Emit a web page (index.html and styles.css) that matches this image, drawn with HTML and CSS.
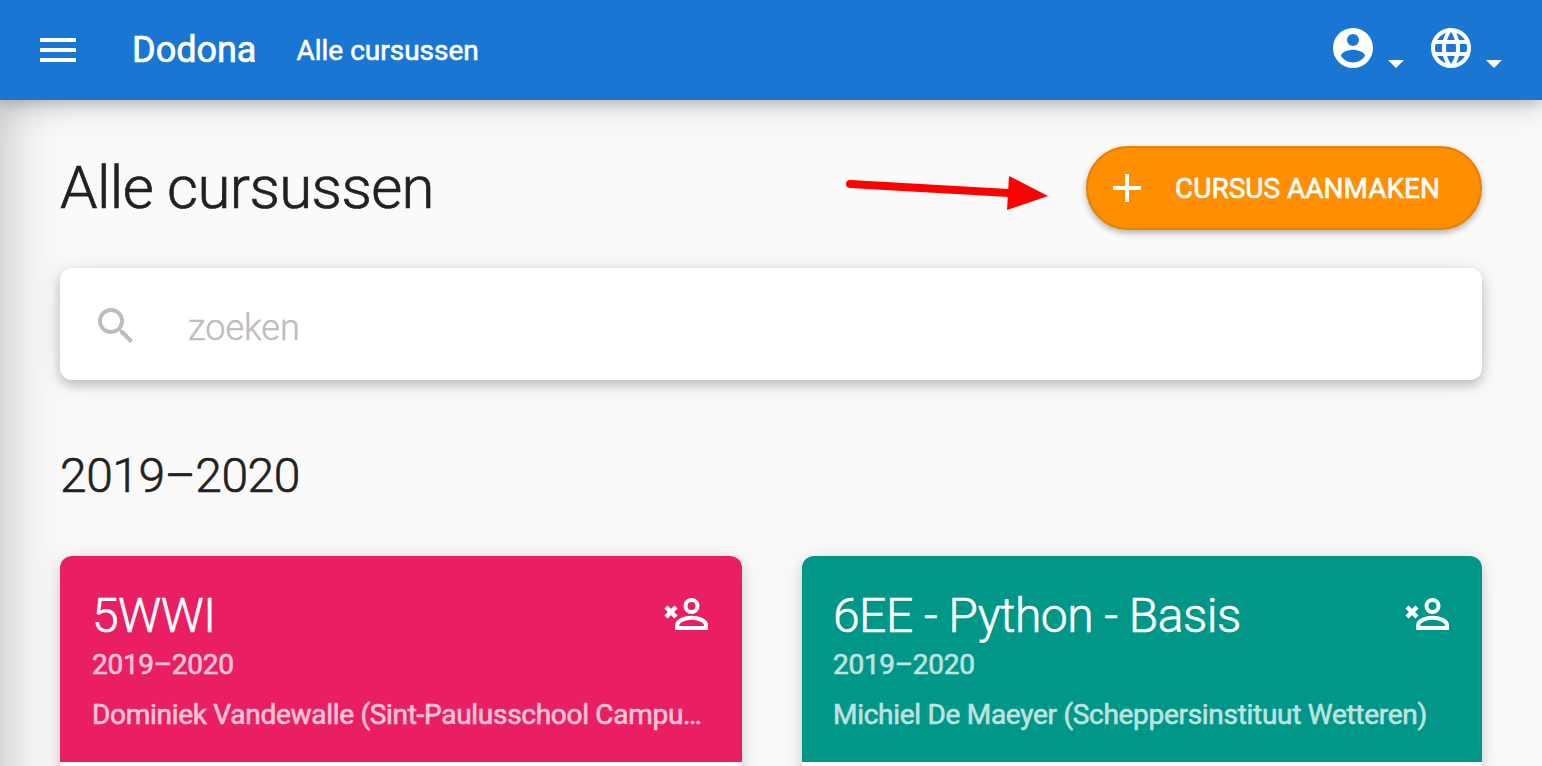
FILE: index.html
```html
<!DOCTYPE html>
<html lang="nl">
<head>
<meta charset="utf-8">
<title>Alle cursussen - Dodona</title>
<link rel="stylesheet" href="styles.css">
</head>
<body>
<header class="navbar">
  <svg class="menu" viewBox="0 0 36 24"><path d="M0 0h36v4H0zM0 10h36v4H0zM0 20h36v4H0z"/></svg>
  <span class="brand">Dodona</span>
  <span class="crumb">Alle cursussen</span>
  <div class="nav-actions">
    <div class="dropdown">
      <svg class="nav-icon" viewBox="0 0 24 24"><path d="M12 19.2c-2.500 0-4.710-1.280-6-3.200.030-2 4-3.100 6-3.100s5.970 1.100 6 3.100a7.230 7.230 0 0 1-6 3.200M12 5a3 3 0 0 1 3 3 3 3 0 0 1-3 3 3 3 0 0 1-3-3 3 3 0 0 1 3-3m0-3A10 10 0 0 0 2 12a10 10 0 0 0 10 10 10 10 0 0 0 10-10c0-5.530-4.500-10-10-10z"/></svg>
      <i class="caret"></i>
    </div>
    <div class="dropdown">
      <svg class="nav-icon" viewBox="0 0 24 24"><path d="M16.360 14c.080-.660.140-1.320.140-2s-.060-1.340-.140-2h3.380c.160.640.260 1.310.260 2s-.100 1.360-.260 2m-5.150 5.560c.600-1.110 1.060-2.310 1.380-3.560h2.950a8.030 8.030 0 0 1-4.330 3.560M14.340 14H9.660c-.100-.660-.160-1.320-.160-2s.060-1.350.160-2h4.680c.090.650.160 1.320.160 2s-.070 1.340-.160 2M12 19.960c-.830-1.200-1.500-2.530-1.910-3.960h3.820c-.410 1.430-1.080 2.760-1.910 3.960M8 8H5.080A7.920 7.920 0 0 1 9.400 4.440C8.800 5.550 8.350 6.750 8 8m-2.920 8H8c.350 1.250.800 2.450 1.400 3.560A8 8 0 0 1 5.080 16m-.820-2C4.100 13.360 4 12.690 4 12s.100-1.360.260-2h3.380c-.080.660-.140 1.320-.140 2s.060 1.340.140 2M12 4.030c.830 1.200 1.500 2.540 1.910 3.970h-3.820c.410-1.430 1.080-2.770 1.910-3.970M18.920 8h-2.950a15.650 15.650 0 0 0-1.380-3.560c1.840.630 3.370 1.900 4.330 3.560M12 2C6.470 2 2 6.500 2 12a10 10 0 0 0 10 10 10 10 0 0 0 10-10A10 10 0 0 0 12 2z"/></svg>
      <i class="caret"></i>
    </div>
  </div>
</header>
<main class="page">
  <div class="heading">
    <h1>Alle cursussen</h1>
    <svg class="arrow" viewBox="0 0 204 40"><path class="shaft" d="M5 10 164 19"/><path class="head" d="M164 2 203 22 162 36z"/></svg>
    <button class="create"><svg viewBox="0 0 28 28"><path d="M12 0h4v12h12v4H16v12h-4V16H0v-4h12z"/></svg><span>CURSUS AANMAKEN</span></button>
  </div>
  <div class="search">
    <svg viewBox="0 0 24 24"><path d="M9.500 3A6.500 6.500 0 0 1 16 9.500c0 1.610-.590 3.090-1.560 4.230l.270.270h.790l5 5-1.500 1.500-5-5v-.790l-.270-.270A6.520 6.520 0 0 1 9.500 16 6.500 6.500 0 0 1 3 9.500 6.500 6.500 0 0 1 9.500 3m0 2C7 5 5 7 5 9.500S7 14 9.500 14 14 12 14 9.500 12 5 9.500 5z"/></svg>
    <input type="text" placeholder="zoeken" aria-label="zoeken">
  </div>
  <h2>2019–2020</h2>
  <div class="courses">
    <article class="card">
      <div class="cover pink">
        <h3>5WWI</h3><p class="year">2019–2020</p><p class="teacher">Dominiek Vandewalle (Sint-Paulusschool Campu…</p>
        <svg class="status" viewBox="0 0 44 34"><path class="cross" d="m2 10 10 10M12 10 2 20"/><circle cx="27.500" cy="9" r="6"/><path d="M13.200 31v-3c0-4 7.200-7.200 14.400-7.200S42 24 42 28v3z"/></svg>
      </div>
    </article>
    <article class="card">
      <div class="cover teal">
        <h3>6EE - Python - Basis</h3><p class="year">2019–2020</p><p class="teacher">Michiel De Maeyer (Scheppersinstituut Wetteren)</p>
        <svg class="status" viewBox="0 0 44 34"><path class="cross" d="m2 10 10 10M12 10 2 20"/><circle cx="27.500" cy="9" r="6"/><path d="M13.200 31v-3c0-4 7.200-7.200 14.400-7.200S42 24 42 28v3z"/></svg>
      </div>
    </article>
  </div>
</main>
</body>
</html>
```
FILE: styles.css
```css
* { box-sizing: border-box; }
body { margin: 0; height: 766px; overflow: hidden; background: #fafafa; color: #212121; font-family: Roboto, sans-serif; }
h1, h2, h3, p { margin: 0; font-weight: 400; white-space: nowrap; }
svg { display: block; flex: none; }
.navbar { position: relative; z-index: 2; height: 100px; padding: 0 40px; display: flex; align-items: center; background: #1976d2; color: #fff; box-shadow: 0 8px 32px rgba(0,0,0,.14), 0 4px 12px rgba(0,0,0,.18); }
.menu { width: 36px; height: 24px; fill: #fff; }
.brand { margin-left: 56px; font-size: 36px; -webkit-text-stroke: .7px; }
.crumb { margin-left: 40px; font-size: 28px; -webkit-text-stroke: .6px; }
.nav-actions { margin-left: auto; display: flex; gap: 23px; }
.dropdown { display: flex; align-items: center; }
.nav-icon { width: 48px; height: 48px; fill: #fff; margin-top: -4px; }
.caret { margin: 27px 0 0 11px; border: 8px solid transparent; border-top-color: #fff; border-bottom: 0; }
.page { height: 666px; padding: 46px 60px 0; overflow: hidden; background: linear-gradient(90deg, rgba(0,0,0,.14), rgba(0,0,0,.09) 14px, rgba(0,0,0,.035) 32px, rgba(0,0,0,.01) 50px, transparent 68px); }
.heading { height: 84px; display: flex; align-items: center; }
h1 { margin-top: -2px; font-size: 60px; font-weight: 300; letter-spacing: -.6px; -webkit-text-stroke: .7px; }
.arrow { width: 204px; height: 40px; margin: 12px 37px 0 auto; }
.shaft { stroke: #f00; stroke-width: 8px; stroke-linecap: round; }
.head { fill: #f00; }
.create { width: 396px; height: 84px; padding: 0 0 0 25px; display: flex; align-items: center; border: 2px solid #e68200; border-radius: 42px; background: #ff8f00; color: #fff; font: 400 28px Roboto, sans-serif; -webkit-text-stroke: .6px; box-shadow: 0 3px 6px rgba(0,0,0,.3); }
.create svg { width: 28px; height: 28px; fill: #fff; margin-right: 34px; -webkit-text-stroke: 0; }
.search { height: 112px; margin-top: 38px; padding: 0 32px; display: flex; align-items: center; background: #fff; border-radius: 12px; box-shadow: 0 5px 12px rgba(0,0,0,.22), 0 2px 28px rgba(0,0,0,.08); }
.search svg { width: 48px; height: 48px; margin-top: 4px; fill: #bdbdbd; }
.search input { flex: 1; margin-left: 48px; padding: 8px 0 0; border: 0; outline: 0; background: none; font: 300 36px Roboto, sans-serif; }
.search input::placeholder { color: #bdbdbd; -webkit-text-stroke: .4px; }
h2 { margin-top: 67px; font-size: 48px; line-height: 58px; font-weight: 300; letter-spacing: -.5px; -webkit-text-stroke: .6px; }
.courses { margin-top: 51px; display: grid; grid-template-columns: 682px 680px; gap: 60px; }
.card { height: 230px; border-radius: 12px; background: #fff; box-shadow: 0 4px 12px rgba(0,0,0,.14), 0 2px 32px rgba(0,0,0,.07); }
.cover { position: relative; height: 206px; padding: 33px 32px 0; border-radius: 12px 12px 0 0; color: #fff; }
.pink { background: #e91e63; }
.teal { padding-left: 31px; background: #009688; }
h3 { font-size: 48px; line-height: 54px; font-weight: 300; letter-spacing: -.51px; -webkit-text-stroke: .6px; }
.year, .teacher { font-size: 28px; line-height: 40px; letter-spacing: -.29px; -webkit-text-stroke: .6px; color: #fff; opacity: .74; }
.year { margin-top: 2px; }
.teacher { margin-top: 10px; }
.status { position: absolute; right: 34px; top: 41px; width: 44px; height: 34px; overflow: visible; fill: none; stroke: #fff; stroke-width: 4px; }
.teal .status { right: 33px; }
.status .cross { stroke-width: 4.5px; }
```
